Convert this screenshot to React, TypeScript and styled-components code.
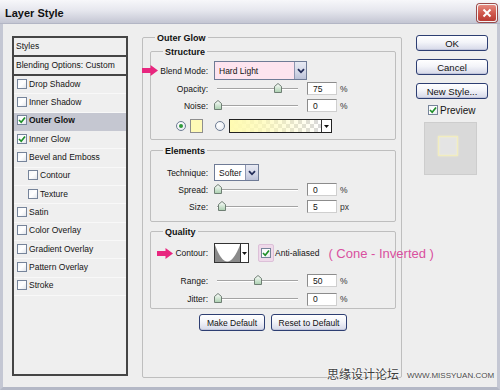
import React from 'react';
import styled, { createGlobalStyle } from 'styled-components';

const GlobalStyle = createGlobalStyle`
  html, body { margin: 0; padding: 0; background: #eeeeee; }
  * { box-sizing: border-box; }
`;

const Window = styled.div`
  position: relative;
  width: 500px;
  height: 390px;
  overflow: hidden;
  display: flex;
  flex-direction: column;
  background: #eeeeee;
  font-family: "Liberation Sans", Arial, sans-serif;
  font-size: 8.5px;
  color: #141414;
`;

const TitleBar = styled.div`
  flex: none;
  height: 24px;
  display: flex;
  align-items: center;
  justify-content: space-between;
  padding: 2px 3px 0 5px;
  background: linear-gradient(#f7f7fa 0%, #e6e7ee 45%, #c4c6d3 100%);
  border-bottom: 1px solid #b3b6c5;
`;

const Title = styled.div`
  font-size: 11px;
  font-weight: bold;
  color: #111;
`;

const CloseBtn = styled.div`
  width: 20px;
  height: 18px;
  border-radius: 3px;
  border: 1px solid #f4f4f4;
  box-shadow: 0 0 0 1px #9a4a4a;
  background: linear-gradient(#e58a80 0%, #d05a4f 50%, #b93a33 100%);
  display: flex;
  align-items: center;
  justify-content: center;
`;

const Body = styled.div`
  flex: 1;
  display: flex;
  align-items: flex-start;
  gap: 14px;
  padding: 12px 9px 0 9px;
  border-left: 3px solid #c4c7d3;
  border-right: 3px solid #c4c7d3;
  border-bottom: 3px solid #b4b8c6;
`;

/* ---------- left styles list ---------- */

const StylesPanel = styled.div`
  width: 116px;
  height: 340px;
  flex: none;
  border: 2px solid #454545;
  background: #efefef;
  display: flex;
  flex-direction: column;
`;

const HeadRow = styled.div`
  height: 19px;
  flex: none;
  display: flex;
  align-items: center;
  padding: 0 0 2px 2px;
  border-bottom: 2px solid #454545;
`;

const StyleRow = styled.div<{ $indent?: boolean; $active?: boolean }>`
  height: 18.35px;
  flex: none;
  display: flex;
  align-items: center;
  gap: 2px;
  padding: 0 0 2px ${(p) => (p.$indent ? 14 : 3)}px;
  background: ${(p) => (p.$active ? '#c5c7d1' : 'transparent')};
  border-bottom: 1px solid ${(p) => (p.$active ? '#c5c7d1' : '#f8f8f8')};
  font-weight: ${(p) => (p.$active ? 'bold' : 'normal')};
  white-space: nowrap;
`;

const CheckBox = styled.div`
  width: 10px;
  height: 10px;
  flex: none;
  border: 1px solid #76849a;
  background: linear-gradient(135deg, #f4f6f9 0%, #ffffff 50%, #e2e6ec 100%);
  display: flex;
  align-items: center;
  justify-content: center;
`;

const Check = ({ checked }: { checked?: boolean }) => (
  <CheckBox>
    {checked && (
      <svg width="8" height="8" viewBox="0 0 8 8">
        <path d="M1 4 L3.2 6.3 L7 1.4" stroke="#1f8f2a" strokeWidth="1.7" fill="none" />
      </svg>
    )}
  </CheckBox>
);

/* ---------- middle ---------- */

const Group = styled.div<{ $mt?: number; $pb?: number; $h?: number; $pl?: number; $pr?: number }>`
  flex: none;
  margin-top: ${(p) => p.$mt ?? 0}px;
  ${(p) => (p.$h ? `height: ${p.$h}px;` : '')}
  padding: 0 ${(p) => p.$pr ?? 0}px ${(p) => p.$pb ?? 0}px ${(p) => p.$pl ?? 0}px;
  border: 1px solid #bebebe;
  border-radius: 2px;
  display: flex;
  flex-direction: column;
`;

const MainGroup = styled(Group)`
  width: 260px;
`;

const GroupTitle = styled.div<{ $ml: number }>`
  align-self: flex-start;
  margin: -6px 0 0 ${(p) => p.$ml}px;
  padding: 0 2px;
  height: 12px;
  line-height: 12px;
  background: #eeeeee;
  font-size: 9px;
  font-weight: bold;
  color: #111;
`;

const Row = styled.div<{ $h: number; $mt?: number }>`
  flex: none;
  height: ${(p) => p.$h}px;
  margin-top: ${(p) => p.$mt ?? 0}px;
  display: flex;
  align-items: center;
  white-space: nowrap;
`;

const Label = styled.div`
  width: 57px;
  flex: none;
  margin-right: 6px;
  display: flex;
  justify-content: flex-end;
  align-items: center;
  gap: 2px;
  white-space: nowrap;
`;

const Select = styled.div<{ $w: number; $h: number; $bg?: string }>`
  flex: none;
  width: ${(p) => p.$w}px;
  height: ${(p) => p.$h}px;
  display: flex;
  border: 1px solid #6f7b96;
  background: ${(p) => p.$bg ?? '#ffffff'};
`;

const SelectText = styled.div`
  flex: 1;
  display: flex;
  align-items: center;
  padding-left: 4px;
`;

const DropBtn = styled.div<{ $w: number }>`
  width: ${(p) => p.$w}px;
  flex: none;
  display: flex;
  align-items: center;
  justify-content: center;
  background: linear-gradient(#e8eaf3 0%, #d2d6e6 60%, #bcc2d8 100%);
  border-left: 1px solid #8e96b0;
`;

const Chevron = () => (
  <svg width="8" height="6" viewBox="0 0 8 6">
    <path d="M1 1.2 L4 4.3 L7 1.2" stroke="#222c58" strokeWidth="1.8" fill="none" />
  </svg>
);

const SmallDrop = styled.div<{ $w: number }>`
  width: ${(p) => p.$w}px;
  flex: none;
  display: flex;
  align-items: center;
  justify-content: center;
  background: #ffffff;
  border-left: 1px solid #333;
`;

const Tri = () => (
  <svg width="5" height="3" viewBox="0 0 5 3">
    <path d="M0 0 H5 L2.5 3 Z" fill="#111" />
  </svg>
);

const SliderBox = styled.div`
  position: relative;
  width: 86px;
  height: 12px;
  flex: none;
  margin-right: 7px;
  &::before {
    content: '';
    position: absolute;
    left: 3px;
    right: 2px;
    top: 5px;
    height: 1px;
    background: #a3a3a3;
    box-shadow: 0 1px 0 #ffffff;
  }
`;

const ThumbSvg = styled.svg`
  position: absolute;
  top: 0;
  margin-left: -4px;
`;

const Slider = ({ value }: { value: number }) => (
  <SliderBox>
    <ThumbSvg width="8" height="10" viewBox="0 0 8 10" style={{ left: 4 + value * 0.8 }}>
      <defs>
        <linearGradient id="tg" x1="0" y1="0" x2="0" y2="1">
          <stop offset="0" stopColor="#ffffff" />
          <stop offset="1" stopColor="#a9cfae" />
        </linearGradient>
      </defs>
      <path d="M4 0.5 L7.5 3.5 L7.5 9.5 L0.5 9.5 L0.5 3.5 Z" fill="url(#tg)" stroke="#6f7f74" strokeWidth="1" />
    </ThumbSvg>
  </SliderBox>
);

const NumBox = styled.div`
  width: 30px;
  height: 13px;
  flex: none;
  margin-right: 3px;
  display: flex;
  align-items: center;
  padding-left: 5px;
  background: #ffffff;
  border: 1px solid #8c8c8c;
  border-right-color: #cfcfcf;
  border-bottom-color: #cfcfcf;
`;

const Unit = styled.span`
  color: #333;
`;

const SliderRow = ({ label, value, unit, h, mt }: { label: string; value: number; unit: string; h: number; mt?: number }) => (
  <Row $h={h} $mt={mt}>
    <Label>{label}</Label>
    <Slider value={value} />
    <NumBox>{value}</NumBox>
    <Unit>{unit}</Unit>
  </Row>
);

const ArrowSvg = styled.svg`
  flex: none;
  display: block;
`;

const Arrow = () => (
  <ArrowSvg width="16" height="11" viewBox="0 0 16 11">
    <path d="M0 3 H8.5 V0 L16 5.5 L8.5 11 V8 H0 Z" fill="#e8267f" />
  </ArrowSvg>
);

const ColorRow = styled(Row)`
  padding-left: 25px;
`;

const Radio = styled.div<{ $on?: boolean }>`
  width: 10px;
  height: 10px;
  flex: none;
  border-radius: 50%;
  border: 1px solid #6d7c94;
  background: radial-gradient(circle at 35% 35%, #ffffff 0%, #e3e7ee 100%);
  display: flex;
  align-items: center;
  justify-content: center;
  &::after {
    content: '';
    width: 4px;
    height: 4px;
    border-radius: 50%;
    background: ${(p) => (p.$on ? '#2f9a3a' : 'transparent')};
  }
`;

const Swatch = styled.div`
  width: 13px;
  height: 14px;
  flex: none;
  margin: 0 12px 0 4px;
  background: #fffab6;
  border: 1px solid #8e8e8e;
`;

const GradientPick = styled.div`
  flex: none;
  width: 103px;
  height: 14px;
  margin-left: 4px;
  display: flex;
  border: 1px solid #222;
`;

const GradientFill = styled.div`
  flex: 1;
  background:
    linear-gradient(to right, #fffbb2 0%, rgba(255, 251, 178, 0.75) 35%, rgba(255, 251, 178, 0) 100%),
    repeating-conic-gradient(#d9d9d9 0 25%, #ffffff 0 50%) 0 0 / 8px 8px;
`;

const ContourPick = styled.div`
  flex: none;
  display: flex;
  height: 20px;
  border: 1px solid #333;
  background: #fff;
`;

const AAHighlight = styled.div`
  flex: none;
  width: 16px;
  height: 18px;
  margin-left: 9px;
  border-radius: 2px;
  background: #efd9ea;
  border: 1px solid #dcc0d8;
  display: flex;
  align-items: center;
  justify-content: center;
`;

const AAText = styled.span`
  margin-left: 1px;
`;

const Annotation = styled.span`
  margin-left: 9px;
  font-size: 13px;
  color: #d9509f;
  white-space: nowrap;
`;

const ButtonRow = styled.div`
  flex: none;
  margin-top: 5px;
  display: flex;
  justify-content: center;
  gap: 6px;
`;

const XPButton = styled.div<{ $w?: number; $h?: number }>`
  ${(p) => (p.$w ? `width: ${p.$w}px;` : '')}
  height: ${(p) => p.$h ?? 16}px;
  flex: none;
  display: flex;
  align-items: center;
  justify-content: center;
  border: 1px solid #2d3e72;
  border-radius: 3px;
  background: linear-gradient(#ffffff 0%, #f3f4f9 45%, #d5d8e8 100%);
  box-shadow: inset 0 -1px 0 #c2c6db;
  color: #111;
  white-space: nowrap;
`;

/* ---------- right column ---------- */

const RightCol = styled.div`
  width: 72px;
  flex: none;
  margin-top: -1px;
  display: flex;
  flex-direction: column;
  gap: 8px;
  font-size: 9.5px;
`;

const PreviewRow = styled.div`
  height: 10px;
  margin-top: -2px;
  padding-left: 12px;
  display: flex;
  align-items: center;
  gap: 2px;
  font-size: 10px;
`;

const PreviewBox = styled.div`
  width: 53px;
  height: 53px;
  margin: -1px 0 0 8px;
  background: #d9d9d9;
  border: 1px solid #cdcdcd;
  display: flex;
  align-items: center;
  justify-content: center;
  padding: 0 5px 6px 0;
`;

const PreviewSquare = styled.div`
  width: 20px;
  height: 20px;
  border: 1px solid #f1ecbf;
  background: #e4e4e4;
  box-shadow: 0 0 2px #f6f1c6, inset 0 0 2px #f6f1c6;
`;

/* ---------- watermark ---------- */

const Watermark = styled.div`
  position: absolute;
  left: 327px;
  top: 365px;
  display: flex;
  align-items: center;
  gap: 8px;
  pointer-events: none;
`;

const WmCn = styled.span`
  font-family: "Noto Sans CJK SC", sans-serif;
  font-size: 12px;
  color: #3e3e3e;
  text-shadow: 0 0 2px #fff, 0 0 2px #fff;
`;

const WmEn = styled.span`
  font-family: "Liberation Sans", Arial, sans-serif;
  font-size: 8px;
  color: #4a4a4a;
  margin-top: 3px;
  text-shadow: 0 0 2px #fff;
`;

const styleItems: { label: string; checked?: boolean; active?: boolean; indent?: boolean }[] = [
  { label: 'Drop Shadow' },
  { label: 'Inner Shadow' },
  { label: 'Outer Glow', checked: true, active: true },
  { label: 'Inner Glow', checked: true },
  { label: 'Bevel and Emboss' },
  { label: 'Contour', indent: true },
  { label: 'Texture', indent: true },
  { label: 'Satin' },
  { label: 'Color Overlay' },
  { label: 'Gradient Overlay' },
  { label: 'Pattern Overlay' },
  { label: 'Stroke' },
];

export default function App() {
  return (
    <>
      <GlobalStyle />
      <Window>
        <TitleBar>
          <Title>Layer Style</Title>
          <CloseBtn>
            <svg width="10" height="10" viewBox="0 0 10 10">
              <path d="M1.5 1.5 L8.5 8.5 M8.5 1.5 L1.5 8.5" stroke="#ffffff" strokeWidth="2" />
            </svg>
          </CloseBtn>
        </TitleBar>
        <Body>
          <StylesPanel>
            <HeadRow>Styles</HeadRow>
            <HeadRow>Blending Options: Custom</HeadRow>
            {styleItems.map((it) => (
              <StyleRow key={it.label} $indent={it.indent} $active={it.active}>
                <Check checked={it.checked} />
                <span>{it.label}</span>
              </StyleRow>
            ))}
          </StylesPanel>

          <MainGroup $mt={1} $h={341} $pl={7} $pr={5}>
            <GroupTitle $ml={5}>Outer Glow</GroupTitle>

            <Group $mt={7} $pb={6}>
              <GroupTitle $ml={12}>Structure</GroupTitle>
              <Row $h={19} $mt={3}>
                <Label>
                  <Arrow />
                  <span>Blend Mode:</span>
                </Label>
                <Select $w={93} $h={19} $bg="#fde4ef">
                  <SelectText>Hard Light</SelectText>
                  <DropBtn $w={12}>
                    <Chevron />
                  </DropBtn>
                </Select>
              </Row>
              <SliderRow label="Opacity:" value={75} unit="%" h={17} />
              <SliderRow label="Noise:" value={0} unit="%" h={17} />
              <ColorRow $h={14} $mt={5}>
                <Radio $on />
                <Swatch />
                <Radio />
                <GradientPick>
                  <GradientFill />
                  <SmallDrop $w={10}>
                    <Tri />
                  </SmallDrop>
                </GradientPick>
              </ColorRow>
            </Group>

            <Group $mt={10} $pb={6}>
              <GroupTitle $ml={12}>Elements</GroupTitle>
              <Row $h={17} $mt={7}>
                <Label>Technique:</Label>
                <Select $w={45} $h={17}>
                  <SelectText>Softer</SelectText>
                  <DropBtn $w={13}>
                    <Chevron />
                  </DropBtn>
                </Select>
              </Row>
              <SliderRow label="Spread:" value={0} unit="%" h={17} />
              <SliderRow label="Size:" value={5} unit="px" h={17} />
            </Group>

            <Group $mt={9}>
              <GroupTitle $ml={12}>Quality</GroupTitle>
              <Row $h={20} $mt={5}>
                <Label>
                  <Arrow />
                  <span>Contour:</span>
                </Label>
                <ContourPick>
                  <svg width="25" height="18" viewBox="0 0 25 18">
                    <rect width="25" height="18" fill="#8a8a8a" />
                    <path d="M0 0 L0 1 Q12 34 25 1 L25 0 Z" fill="#ffffff" />
                  </svg>
                  <SmallDrop $w={8}>
                    <Tri />
                  </SmallDrop>
                </ContourPick>
                <AAHighlight>
                  <Check checked />
                </AAHighlight>
                <AAText>Anti-aliased</AAText>
                <Annotation>( Cone - Inverted )</Annotation>
              </Row>
              <SliderRow label="Range:" value={50} unit="%" h={19} mt={8} />
              <SliderRow label="Jitter:" value={0} unit="%" h={18} />
            </Group>

            <ButtonRow>
              <XPButton $w={66} $h={17}>Make Default</XPButton>
              <XPButton $w={76} $h={17}>Reset to Default</XPButton>
            </ButtonRow>
          </MainGroup>

          <RightCol>
            <XPButton>OK</XPButton>
            <XPButton>Cancel</XPButton>
            <XPButton>New Style...</XPButton>
            <PreviewRow>
              <Check checked />
              <span>Preview</span>
            </PreviewRow>
            <PreviewBox>
              <PreviewSquare />
            </PreviewBox>
          </RightCol>
        </Body>
        <Watermark>
          <WmCn>思缘设计论坛</WmCn>
          <WmEn>WWW.MISSYUAN.COM</WmEn>
        </Watermark>
      </Window>
    </>
  );
}
